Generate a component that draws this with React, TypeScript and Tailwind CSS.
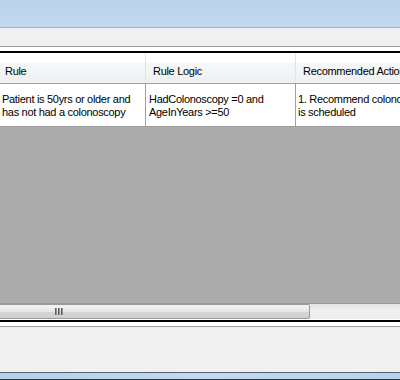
export default function App() {
  const font = "font-['Tahoma','Liberation_Sans',sans-serif]"
  return (
    <div className={`w-[400px] h-[380px] overflow-hidden flex flex-col bg-[#f0f0f0] text-[11px] tracking-[-0.3px] text-black ${font}`}>
      {/* title band */}
      <div className="h-[27px] bg-[linear-gradient(to_bottom,#bad2ec,#c3d9f1)]" />
      <div className="h-px bg-[#9fb1c6]" />
      {/* toolbar strip */}
      <div className="h-[18px] bg-[#f0f0f0]" />
      <div className="h-px bg-[#a0a0a0]" />
      <div className="h-[4px] bg-white" />
      <div className="h-[2px] bg-black" />

      {/* grid */}
      <div className="flex-1 flex flex-col bg-[#ababab] min-h-0">
        {/* header row */}
        <div className="h-[31px] flex bg-[linear-gradient(to_bottom,#ffffff_0%,#ffffff_32%,#f6f7f9_33%,#eff0f2_100%)] border-b border-[#a0a0a0]">
          <div className="w-[146px] shrink-0 flex items-center pl-[5px] pt-[6px] border-r border-[#e2e3e5]">Rule</div>
          <div className="w-[150px] shrink-0 flex items-center pl-[7px] pt-[6px] border-r border-[#e2e3e5]">Rule Logic</div>
          <div className="w-[150px] shrink-0 flex items-center pl-[7px] pt-[6px] whitespace-nowrap">Recommended Action</div>
        </div>
        {/* data row */}
        <div className="h-[43px] flex bg-white border-b border-[#a0a0a0] leading-[13px]">
          <div className="w-[146px] shrink-0 flex items-center pl-[2px] pt-[2px] border-r border-[#a0a0a0]">
            <div>Patient is 50yrs or older and<br />has not had a colonoscopy</div>
          </div>
          <div className="w-[150px] shrink-0 flex items-center pl-[3px] pt-[2px] border-r border-[#a0a0a0]">
            <div>HadColonoscopy =0 and<br />AgeInYears &gt;=50</div>
          </div>
          <div className="w-[200px] shrink-0 flex items-center pl-[2px] pt-[2px] whitespace-nowrap">
            <div>1. Recommend colonoscopy<br />is scheduled</div>
          </div>
        </div>
        <div className="flex-1" />
        {/* horizontal scrollbar */}
        <div className="h-[16px] flex bg-[linear-gradient(to_bottom,#e3e3e3,#f0f0f0_40%,#ececec)] border-t border-[#9a9a9a]">
          <div className="w-[310px] shrink-0 h-full rounded-r-[2px] border border-l-0 border-[#9b9b9b] bg-[linear-gradient(to_bottom,#f4f4f4,#e6e6e6_50%,#d6d6d6_51%,#cfcfcf)] flex items-center">
            <div className="ml-[55px] flex gap-[1px]">
              <div className="w-[2px] h-[7px] bg-[linear-gradient(to_right,#444,#aaa)]" />
              <div className="w-[2px] h-[7px] bg-[linear-gradient(to_right,#444,#aaa)]" />
              <div className="w-[2px] h-[7px] bg-[linear-gradient(to_right,#444,#aaa)]" />
            </div>
          </div>
          <div className="flex-1" />
        </div>
      </div>
      <div className="h-px bg-white" />
      <div className="h-[2px] bg-black" />
      <div className="h-[4px] bg-white" />
      <div className="h-px bg-[#a0a0a0]" />
      <div className="h-[45px] bg-[#f0f0f0]" />
      <div className="h-px bg-[#56626e]" />
      <div className="h-[6px] bg-[linear-gradient(to_right,#b5d0ec,#c2d9f1,#b8d3ee)]" />
      <div className="h-px bg-[#30353a]" />
    </div>
  )
}
